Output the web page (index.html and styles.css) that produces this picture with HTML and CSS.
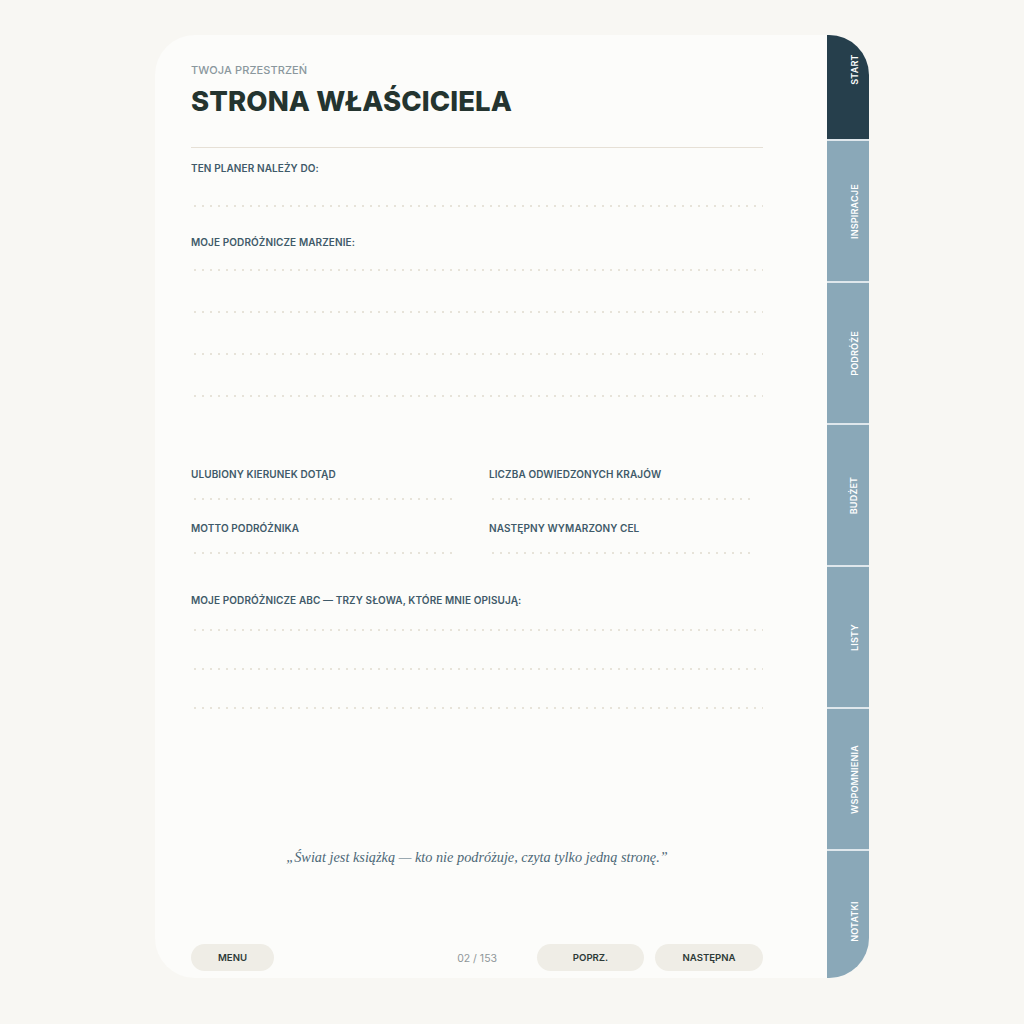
FILE: index.html
```html
<!DOCTYPE html>
<html lang="pl">
<head>
<meta charset="utf-8">
<title>Strona właściciela</title>
<link rel="stylesheet" href="styles.css">
</head>
<body>
<div class="book">
  <main class="page">
    <header class="head">
      <div class="eyebrow">TWOJA PRZESTRZEŃ</div>
      <h1 class="title">STRONA WŁAŚCICIELA</h1>
    </header>
    <div class="rule"></div>

    <section class="field f-owner">
      <div class="label">TEN PLANER NALEŻY DO:</div>
      <div class="dots d-owner"></div>
    </section>

    <section class="field f-dream">
      <div class="label">MOJE PODRÓŻNICZE MARZENIE:</div>
      <div class="dots d-dream1"></div>
      <div class="dots d-dream"></div>
      <div class="dots d-dream"></div>
      <div class="dots d-dream"></div>
    </section>

    <section class="grid2">
      <div class="cell">
        <div class="label">ULUBIONY KIERUNEK DOTĄD</div>
        <div class="dots d-cell"></div>
      </div>
      <div class="cell">
        <div class="label">LICZBA ODWIEDZONYCH KRAJÓW</div>
        <div class="dots d-cell"></div>
      </div>
      <div class="cell">
        <div class="label">MOTTO PODRÓŻNIKA</div>
        <div class="dots d-cell"></div>
      </div>
      <div class="cell">
        <div class="label">NASTĘPNY WYMARZONY CEL</div>
        <div class="dots d-cell"></div>
      </div>
    </section>

    <section class="field f-abc">
      <div class="label">MOJE PODRÓŻNICZE ABC — TRZY SŁOWA, KTÓRE MNIE OPISUJĄ:</div>
      <div class="dots d-abc1"></div>
      <div class="dots d-abc"></div>
      <div class="dots d-abc"></div>
    </section>

    <p class="quote">„Świat jest książką — kto nie podróżuje, czyta tylko jedną stronę.”</p>

    <footer class="foot">
      <button class="pill pill-menu">MENU</button>
      <span class="counter">02 / 153</span>
      <button class="pill pill-prev">POPRZ.</button>
      <button class="pill pill-next">NASTĘPNA</button>
    </footer>
  </main>

  <nav class="tabs">
    <div class="tab-list">
      <div class="tab active"><span>START</span></div>
      <div class="tab"><span>INSPIRACJE</span></div>
      <div class="tab"><span>PODRÓŻE</span></div>
      <div class="tab"><span>BUDŻET</span></div>
      <div class="tab"><span>LISTY</span></div>
      <div class="tab"><span>WSPOMNIENIA</span></div>
      <div class="tab"><span>NOTATKI</span></div>
    </div>
  </nav>
</div>
</body>
</html>
```

FILE: styles.css
```css
* { box-sizing: border-box; }
html, body { margin: 0; padding: 0; }
body {
  background: #f8f7f3;
  font-family: "Inter", "Noto Sans", "DejaVu Sans", sans-serif;
  width: 1024px;
  height: 1024px;
}
.book {
  display: flex;
  width: 714px;
  height: 943px;
  margin: 35px auto 0;
}
.page {
  flex: 1;
  background: #fcfcfa;
  border-radius: 40px 0 0 40px;
  padding: 28px 64px 0 36px;
  display: flex;
  flex-direction: column;
}
.eyebrow {
  font-size: 11px;
  font-weight: 500;
  color: #8a979d;
  line-height: 14px;
  letter-spacing: 0.1px;
}
.title {
  margin: 9px 0 0;
  font-size: 27.5px;
  line-height: 30px;
  font-weight: 800;
  color: #24342f;
  letter-spacing: 0.1px;
}
.rule {
  height: 1px;
  background: #e6e0d6;
  margin-top: 31px;
}
.label {
  font-size: 10px;
  line-height: 13px;
  font-weight: 600;
  color: #3f5a69;
  letter-spacing: 0.1px;
}
.dots {
  height: 2px;
  background-image: radial-gradient(circle, #e7e3d9 0.75px, transparent 1px);
  background-size: 8px 2px;
  background-repeat: repeat-x;
}
.f-owner { margin-top: 14px; }
.d-owner { margin-top: 30px; }
.f-dream { margin-top: 29px; }
.d-dream1 { margin-top: 20px; }
.d-dream { margin-top: 40px; }
.grid2 {
  margin-top: 71px;
  display: grid;
  grid-template-columns: 267px 274px;
  column-gap: 31px;
  row-gap: 22px;
}
.d-cell { margin-top: 17px; width: 267px; }
.f-abc { margin-top: 40px; }
.d-abc1 { margin-top: 22px; }
.d-abc { margin-top: 37px; }
.quote {
  margin: 140px 0 0;
  text-align: center;
  font-family: "Liberation Serif", "DejaVu Serif", serif;
  font-style: italic;
  font-size: 14.3px;
  color: #4c6877;
}
.foot {
  margin-top: auto;
  margin-bottom: 7px;
  display: flex;
  align-items: center;
  height: 27px;
}
.pill {
  border: none;
  background: #efede6;
  border-radius: 14px;
  height: 27px;
  font-family: inherit;
  font-size: 9.6px;
  font-weight: 600;
  color: #2d3a37;
  padding: 0;
  cursor: pointer;
}
.pill-menu { width: 83px; }
.counter {
  flex: 1;
  text-align: right;
  white-space: nowrap;
  font-size: 10.5px;
  color: #8f9699;
  padding-top: 2px;
}
.pill-prev { width: 107px; margin-left: 40px; }
.pill-next { width: 108px; margin-left: 11px; }

.tabs {
  width: 42px;
  overflow: hidden;
  border-radius: 0 40px 40px 0;
}
.tab-list {
  margin-top: -36px;
  display: flex;
  flex-direction: column;
  gap: 2px;
  background: #dfe7ec;
}
.tab {
  height: 140px;
  background: #8aa8b8;
  display: flex;
  align-items: center;
  justify-content: center;
  padding-left: 12px;
}
.tab.active { background: #263f4c; }
.tab span {
  transform: rotate(-90deg);
  white-space: nowrap;
  color: #ffffff;
  font-size: 9px;
  font-weight: 600;
  letter-spacing: 0.2px;
}
```
